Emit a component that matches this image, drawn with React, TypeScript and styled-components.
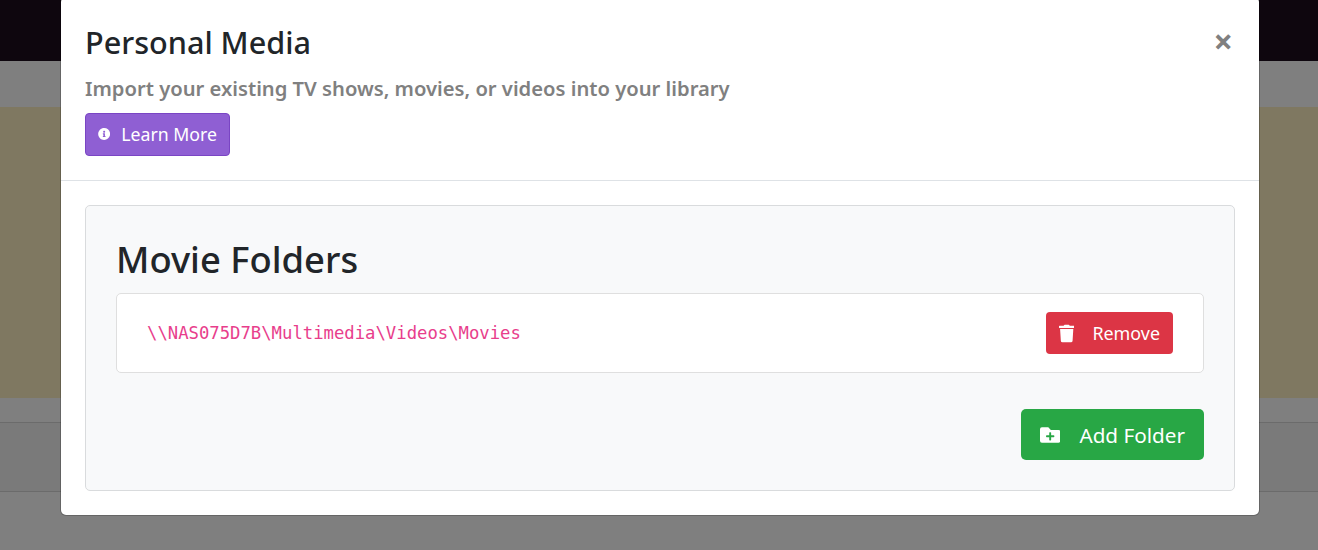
import React from 'react'
import styled, { createGlobalStyle } from 'styled-components'
import { FaInfoCircle, FaTrash, FaFolderPlus } from 'react-icons/fa'

const GlobalStyle = createGlobalStyle`
  html, body {
    margin: 0;
    height: 100%;
    overflow: hidden;
    font-family: "Noto Sans", "Open Sans", sans-serif;
  }
`

export default function App() {
  return (
    <Page>
      <GlobalStyle />
      <TopBar />
      <SubBar />
      <Banner />
      <Spacer />
      <ListRow />
      <ListRowLast />
      <Modal>
        <Header>
          <Title>Personal Media</Title>
          <Subtitle>Import your existing TV shows, movies, or videos into your library</Subtitle>
          <LearnButton>
            <FaInfoCircle size={14} />
            Learn More
          </LearnButton>
          <Close>×</Close>
        </Header>
        <Body>
          <Panel>
            <PanelTitle>Movie Folders</PanelTitle>
            <FolderRow>
              <Path>\\NAS075D7B\Multimedia\Videos\Movies</Path>
              <RemoveButton>
                <FaTrash size={19} />
                Remove
              </RemoveButton>
            </FolderRow>
            <Actions>
              <AddButton>
                <FaFolderPlus size={22} />
                Add Folder
              </AddButton>
            </Actions>
          </Panel>
        </Body>
      </Modal>
    </Page>
  )
}

const Page = styled.div`
  position: relative;
  width: 1318px;
  height: 550px;
  overflow: hidden;
  display: flex;
  flex-direction: column;
  background-color: #7f7f7f;
`

const TopBar = styled.div`
  height: 61px;
  background-color: #0e060e;
`

const SubBar = styled.div`
  height: 46px;
  background-color: #7f7f7f;
`

const Banner = styled.div`
  height: 291px;
  background-color: #7f7861;
`

const Spacer = styled.div`
  height: 24px;
  background-color: #7f7f7f;
`

const ListRow = styled.div`
  height: 69px;
  box-sizing: border-box;
  border-top: 1px solid #6b6b6b;
  background-color: #7a7a7a;
`

const ListRowLast = styled.div`
  flex: 1;
  border-top: 1px solid #6b6b6b;
  background-color: #7f7f7f;
`

const Modal = styled.div`
  position: absolute;
  left: 60px;
  top: -4px;
  width: 1200px;
  height: 520px;
  box-sizing: border-box;
  background-color: #fff;
  border: 1px solid rgba(0, 0, 0, 0.2);
  border-radius: 6px;
  background-clip: padding-box;
  display: flex;
  flex-direction: column;
`

const Header = styled.div`
  position: relative;
  height: 185px;
  box-sizing: border-box;
  padding: 25px 24px 0;
  border-bottom: 1px solid #dee2e6;
`

const Title = styled.h5`
  margin: 0;
  font-size: 30.6px;
  font-weight: 500;
  line-height: 40px;
  white-space: nowrap;
  color: #212529;
`

const Subtitle = styled.h6`
  margin: 13px 0 0;
  font-size: 20.2px;
  font-weight: 600;
  line-height: 27px;
  white-space: nowrap;
  color: #808080;
`

const Close = styled.span`
  position: absolute;
  right: 26px;
  top: 24px;
  font-size: 34px;
  font-weight: 700;
  line-height: 40px;
  color: #808080;
`

const Button = styled.button`
  display: inline-flex;
  align-items: center;
  box-sizing: border-box;
  font-family: inherit;
  font-weight: 400;
  white-space: nowrap;
  color: #fff;
`

const LearnButton = styled(Button)`
  margin-top: 11px;
  width: 145px;
  height: 43px;
  padding: 0 12px 2px;
  gap: 11px;
  font-size: 17.7px;
  background-color: #8f5fd3;
  border: 1px solid #7a45c4;
  border-radius: 4px;
`

const Body = styled.div`
  flex: 1;
  padding: 24px 24px;
`

const Panel = styled.div`
  height: 286px;
  box-sizing: border-box;
  padding: 29px 30px 0;
  background-color: #f8f9fa;
  border: 1px solid #d9dbdd;
  border-radius: 5px;
`

const PanelTitle = styled.h2`
  margin: 0;
  font-size: 36.4px;
  font-weight: 500;
  line-height: 48px;
  white-space: nowrap;
  color: #212529;
`

const FolderRow = styled.div`
  display: flex;
  align-items: center;
  justify-content: space-between;
  margin-top: 10px;
  height: 80px;
  box-sizing: border-box;
  padding: 0 30px;
  background-color: #fff;
  border: 1px solid #dfdfdf;
  border-radius: 5px;
`

const Path = styled.code`
  font-family: "DejaVu Sans Mono", "Liberation Mono", monospace;
  font-size: 17.25px;
  color: #e83e8c;
`

const RemoveButton = styled(Button)`
  width: 127px;
  height: 42px;
  padding: 0 13px;
  gap: 18px;
  font-size: 17.9px;
  background-color: #dc3545;
  border: none;
  border-radius: 4px;
`

const Actions = styled.div`
  display: flex;
  justify-content: flex-end;
  margin-top: 36px;
`

const AddButton = styled(Button)`
  width: 183px;
  height: 51px;
  padding: 0 19px;
  gap: 19px;
  font-size: 20.7px;
  background-color: #28a745;
  border: none;
  border-radius: 5px;
`
